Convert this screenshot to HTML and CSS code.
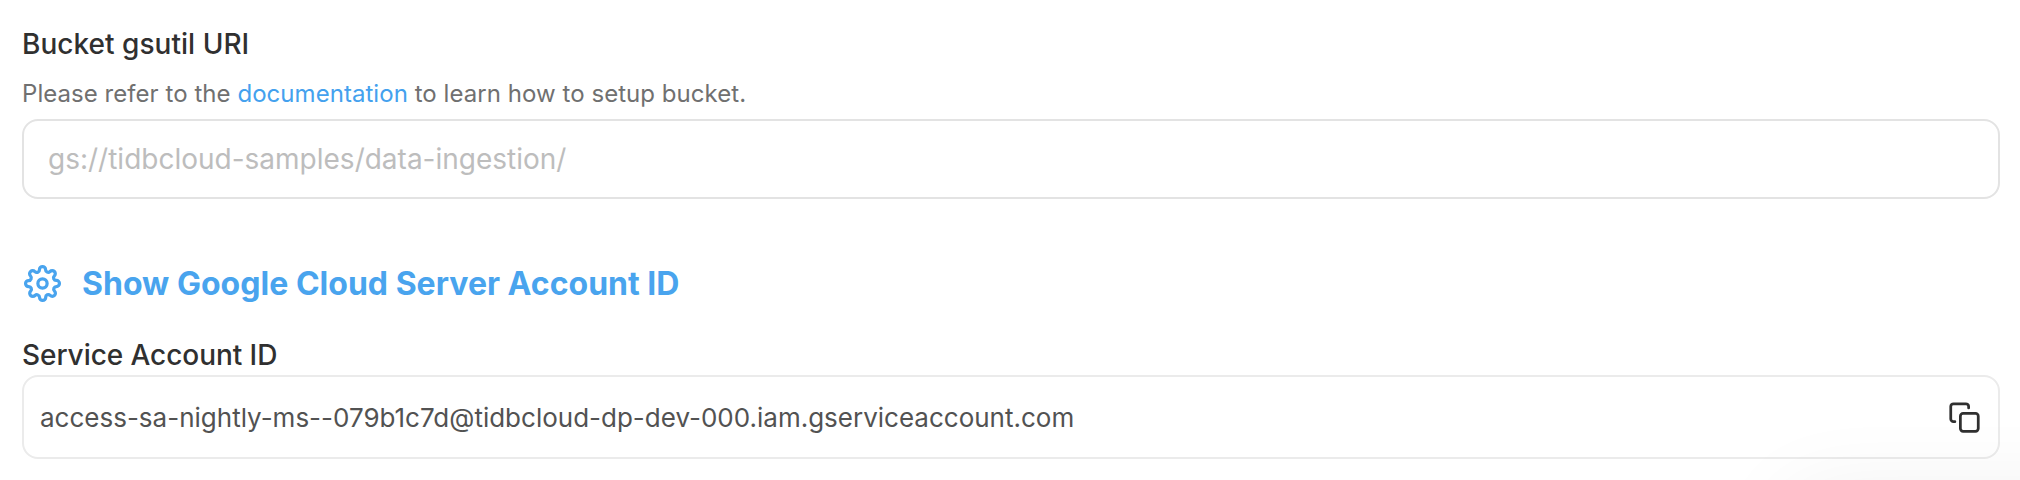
FILE: index.html
```html
<!DOCTYPE html>
<html lang="en">
<head>
<meta charset="utf-8">
<title>Bucket</title>
<link rel="stylesheet" href="styles.css">
</head>
<body>
<main class="form">
<label class="label" for="uri">Bucket gsutil URI</label>
<p class="hint">Please refer to the <a class="link">documentation</a> to learn how to setup bucket.</p>
<input class="field" id="uri" placeholder="gs://tidbcloud-samples/data-ingestion/">
<div class="toggle">
<svg class="gear" viewBox="0 0 24 24"><circle cx="12" cy="12" r="3"/><path d="M19.4 15a1.65 1.65 0 0 0 .33 1.82l.06.06a2 2 0 0 1 0 2.83 2 2 0 0 1-2.83 0l-.06-.06a1.65 1.65 0 0 0-1.82-.33 1.65 1.65 0 0 0-1 1.51V21a2 2 0 0 1-2 2 2 2 0 0 1-2-2v-.09A1.65 1.65 0 0 0 9 19.4a1.65 1.65 0 0 0-1.82.33l-.06.06a2 2 0 0 1-2.83 0 2 2 0 0 1 0-2.83l.06-.06a1.65 1.65 0 0 0 .33-1.82 1.65 1.65 0 0 0-1.51-1H3a2 2 0 0 1-2-2 2 2 0 0 1 2-2h.09A1.65 1.65 0 0 0 4.6 9a1.65 1.65 0 0 0-.33-1.82l-.06-.06a2 2 0 0 1 0-2.83 2 2 0 0 1 2.83 0l.06.06a1.65 1.65 0 0 0 1.82.33H9a1.65 1.65 0 0 0 1-1.51V3a2 2 0 0 1 2-2 2 2 0 0 1 2 2v.09a1.65 1.65 0 0 0 1 1.51 1.65 1.65 0 0 0 1.82-.33l.06-.06a2 2 0 0 1 2.83 0 2 2 0 0 1 0 2.83l-.06.06a1.65 1.65 0 0 0-.33 1.82V9a1.65 1.65 0 0 0 1.51 1H21a2 2 0 0 1 2 2 2 2 0 0 1-2 2h-.09a1.65 1.65 0 0 0-1.51 1z"/></svg>
<span class="toggle-text">Show Google Cloud Server Account ID</span>
</div>
<div class="label label-account">Service Account ID</div>
<div class="account">
<span class="account-id">access-sa-nightly-ms--079b1c7d@tidbcloud-dp-dev-000.iam.gserviceaccount.com</span>
<svg class="copy" viewBox="0 0 24 24"><rect x="9" y="9" width="13" height="13" rx="2"/><path d="M5 15H4a2 2 0 0 1-2-2V4a2 2 0 0 1 2-2h9a2 2 0 0 1 2 2v1"/></svg>
</div>
</main>
<div class="corner-shadow"></div>
</body>
</html>
```
FILE: styles.css
```css
* { box-sizing: border-box; }
body { margin: 0; background: #fff; font-family: Inter, sans-serif; overflow: hidden; }
.form { height: 480px; overflow: hidden; padding: 24px 20px 0 22px; display: flex; flex-direction: column; }
.label { font-size: 28px; line-height: 40px; font-weight: 500; color: #303030; letter-spacing: 0.03px; }
.hint { margin: 12px 0 7px; font-size: 24px; line-height: 36px; color: #707070; letter-spacing: 0.05px; }
.link { color: #44a1ee; }
.field { height: 80px; border: 2px solid #e3e3e3; border-radius: 16px; padding: 0 24px; font: 28px Inter, sans-serif; }
.field::placeholder { color: #bdbdbd; opacity: 1; }
.toggle { display: flex; align-items: center; gap: 21px; margin-top: 62px; height: 44px; padding-left: 2px; color: #49a4ee; }
.gear { width: 37px; height: 37px; fill: none; stroke: currentColor; stroke-width: 2.1; stroke-linejoin: round; overflow: visible; }
.toggle-text { font-size: 32px; font-weight: 700; letter-spacing: 0.02px; }
.label-account { margin-top: 30px; letter-spacing: -0.06px; }
.account { height: 84px; border: 2px solid #ebebeb; border-radius: 16px; padding: 0 17px 0 16px; display: flex; align-items: center; justify-content: space-between; }
.account-id { font-size: 26px; color: #525252; }
.copy { width: 33px; height: 33px; fill: none; stroke: #303030; stroke-width: 2; stroke-linejoin: round; stroke-linecap: round; }
/* Soft shadow of the floating panel below the fold */
.corner-shadow { position: fixed; left: 1790px; top: 496px; width: 400px; height: 300px; border-radius: 16px; box-shadow: 0 0 90px rgba(0, 0, 0, 0.07); pointer-events: none; }
```
